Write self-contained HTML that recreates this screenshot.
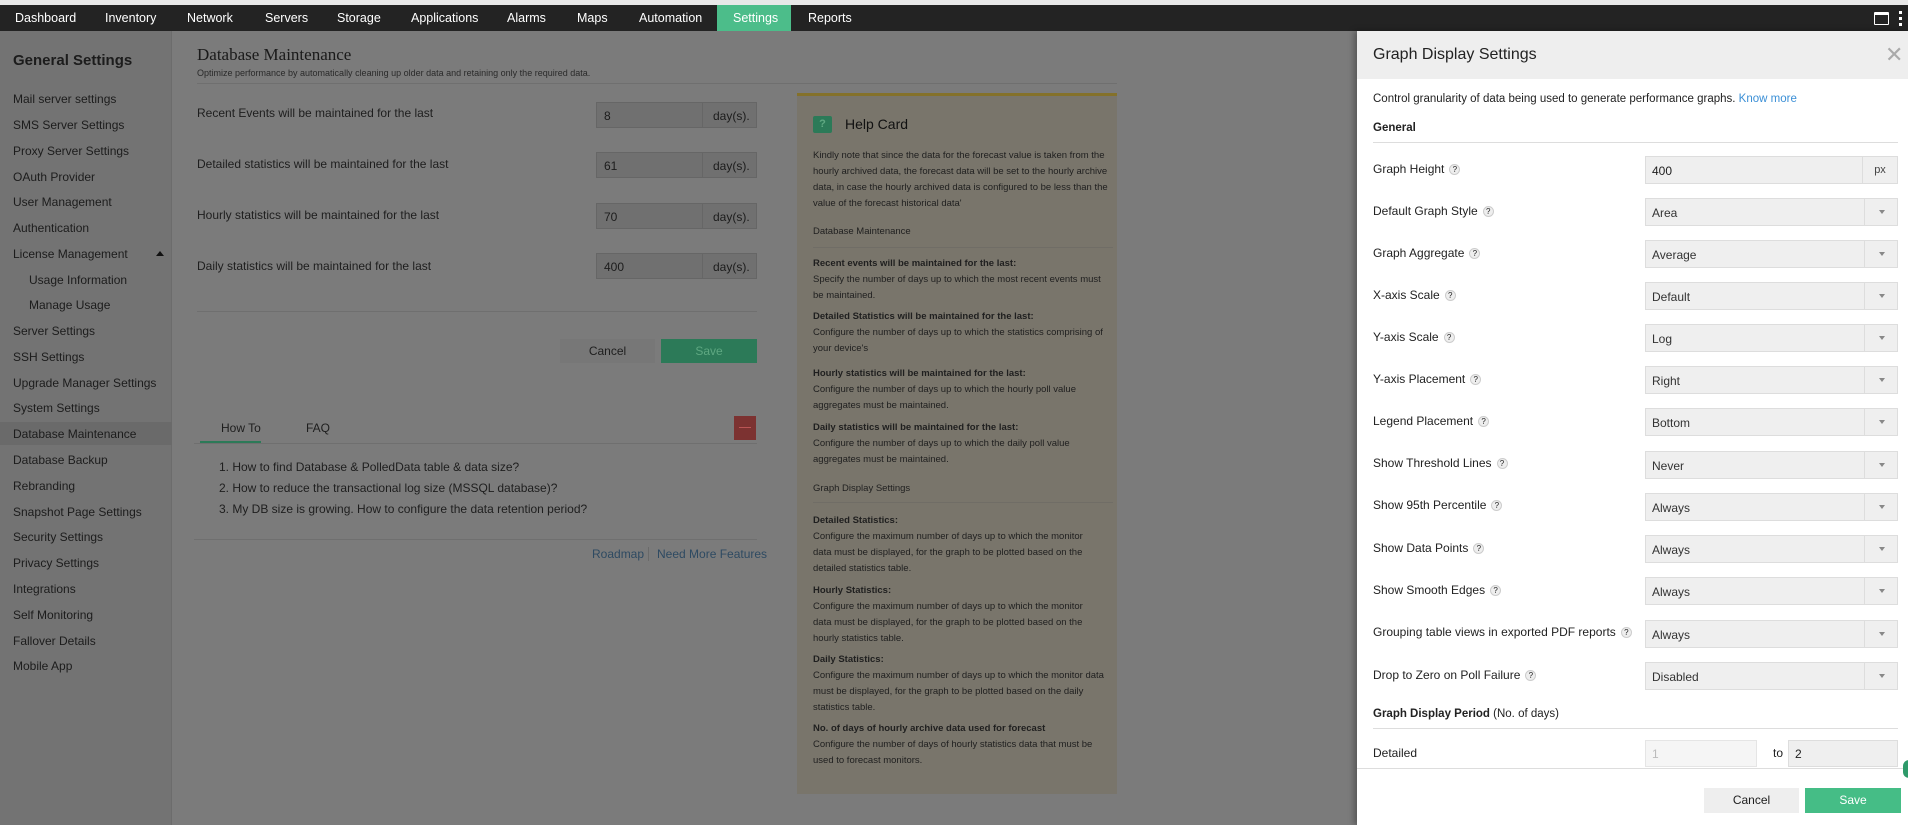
<!DOCTYPE html>
<html><head><meta charset="utf-8"><style>
*{box-sizing:border-box;margin:0;padding:0}
body{width:1908px;height:825px;overflow:hidden;position:relative;background:#7b7b7b;font-family:"Liberation Sans",sans-serif;color:#1e1e1e}
.a{position:absolute;white-space:nowrap}
#top{left:0;top:0;width:1908px;height:5px;background:#e8e8e8}
#nav{left:0;top:5px;width:1908px;height:26px;background:#232323}
#tab{left:717px;top:5px;width:74px;height:26px;background:#4cbd8a}
#side{left:0;top:31px;width:172px;height:794px;background:#737373;border-right:1px solid #6c6c6c}
.si{position:absolute;left:13px;font-size:12px;color:#1c1c1c}
.in{position:absolute;height:26px;background:#707070;border:1px solid #666;font-size:12px;padding:6px 7px;color:#1c1c1c}
.hc{font-size:9.5px;color:#1f1f1f;line-height:16px;white-space:normal;width:300px}
#panel{left:1357px;top:31px;width:551px;height:794px;background:#fff;box-shadow:-3px 0 6px rgba(0,0,0,.3)}
.pl{position:absolute;left:16px;font-size:12px;color:#222}
.q{display:inline-block;width:11px;height:11px;border-radius:50%;background:#eee;border:1px solid #ccc;font-size:8px;text-align:center;line-height:9px;margin-left:5px;vertical-align:middle}
.sel{position:absolute;left:288px;width:253px;height:28px;background:#efefef;border:1px solid #ddd;font-size:12px;padding:7px 6px;color:#333}
.sel:after{content:"";position:absolute;right:0;top:0;width:32px;height:26px;border-left:1px solid #ddd}
.sel i{position:absolute;right:12px;top:11px;border:3.5px solid transparent;border-top:4px solid #888}
</style></head><body>
<div class="a" id="top"></div>
<div class="a" id="nav"></div>
<div class="a" id="tab"></div>
<div class="a" style="left:0;top:5px;width:900px;height:26px">
<span class="a" style="left:15px;top:6px;color:#fff;font-size:12.5px">Dashboard</span>
<span class="a" style="left:105px;top:6px;color:#fff;font-size:12.5px">Inventory</span>
<span class="a" style="left:187px;top:6px;color:#fff;font-size:12.5px">Network</span>
<span class="a" style="left:265px;top:6px;color:#fff;font-size:12.5px">Servers</span>
<span class="a" style="left:337px;top:6px;color:#fff;font-size:12.5px">Storage</span>
<span class="a" style="left:411px;top:6px;color:#fff;font-size:12.5px">Applications</span>
<span class="a" style="left:507px;top:6px;color:#fff;font-size:12.5px">Alarms</span>
<span class="a" style="left:577px;top:6px;color:#fff;font-size:12.5px">Maps</span>
<span class="a" style="left:639px;top:6px;color:#fff;font-size:12.5px">Automation</span>
<span class="a" style="left:733px;top:6px;color:#fff;font-size:12.5px">Settings</span>
<span class="a" style="left:808px;top:6px;color:#fff;font-size:12.5px">Reports</span>
</div>
<div class="a" style="left:1874px;top:12px;width:15px;height:13px;border:1.5px solid #fff;border-top-width:3px;border-radius:1px"></div>
<div class="a" style="left:1899px;top:11px;width:4px;height:15px;border-left:3px dotted #fff"></div>

<div class="a" id="side">
<div class="a" style="left:13px;top:21px;font-size:15px;font-weight:bold;color:#1c1c1c">General Settings</div>
<div class="a" style="left:0;top:391px;width:172px;height:23px;background:#6a6a6a"></div>
<div class="si" style="top:61px">Mail server settings</div>
<div class="si" style="top:87px">SMS Server Settings</div>
<div class="si" style="top:113px">Proxy Server Settings</div>
<div class="si" style="top:139px">OAuth Provider</div>
<div class="si" style="top:164px">User Management</div>
<div class="si" style="top:190px">Authentication</div>
<div class="si" style="top:216px">License Management</div>
<div class="a" style="left:156px;top:220px;border:4px solid transparent;border-bottom:5px solid #111;border-top:0"></div>
<div class="si" style="left:29px;top:242px">Usage Information</div>
<div class="si" style="left:29px;top:267px">Manage Usage</div>
<div class="si" style="top:293px">Server Settings</div>
<div class="si" style="top:319px">SSH Settings</div>
<div class="si" style="top:345px">Upgrade Manager Settings</div>
<div class="si" style="top:370px">System Settings</div>
<div class="si" style="top:396px">Database Maintenance</div>
<div class="si" style="top:422px">Database Backup</div>
<div class="si" style="top:448px">Rebranding</div>
<div class="si" style="top:474px">Snapshot Page Settings</div>
<div class="si" style="top:499px">Security Settings</div>
<div class="si" style="top:525px">Privacy Settings</div>
<div class="si" style="top:551px">Integrations</div>
<div class="si" style="top:577px">Self Monitoring</div>
<div class="si" style="top:603px">Fallover Details</div>
<div class="si" style="top:628px">Mobile App</div>
</div>

<div class="a" style="left:197px;top:45px;font-size:17px;font-family:'Liberation Serif',serif;color:#1a1a1a">Database Maintenance</div>
<div class="a" style="left:197px;top:68px;font-size:9px;color:#2a2a2a">Optimize performance by automatically cleaning up older data and retaining only the required data.</div>
<div class="a" style="left:197px;top:83px;width:920px;height:1px;background:#6f6f6f"></div>

<div class="a" style="left:197px;top:106px;font-size:12px">Recent Events will be maintained for the last</div>
<div class="a" style="left:197px;top:157px;font-size:12px">Detailed statistics will be maintained for the last</div>
<div class="a" style="left:197px;top:208px;font-size:12px">Hourly statistics will be maintained for the last</div>
<div class="a" style="left:197px;top:259px;font-size:12px">Daily statistics will be maintained for the last</div>
<div class="in" style="left:596px;top:102px;width:107px">8</div><div class="in" style="left:702px;top:102px;width:55px;padding-left:10px">day(s).</div>
<div class="in" style="left:596px;top:152px;width:107px">61</div><div class="in" style="left:702px;top:152px;width:55px;padding-left:10px">day(s).</div>
<div class="in" style="left:596px;top:203px;width:107px">70</div><div class="in" style="left:702px;top:203px;width:55px;padding-left:10px">day(s).</div>
<div class="in" style="left:596px;top:253px;width:107px">400</div><div class="in" style="left:702px;top:253px;width:55px;padding-left:10px">day(s).</div>
<div class="a" style="left:197px;top:311px;width:560px;height:1px;background:#6f6f6f"></div>
<div class="a" style="left:560px;top:339px;width:95px;height:24px;background:#777;font-size:12px;text-align:center;line-height:24px">Cancel</div>
<div class="a" style="left:661px;top:339px;width:96px;height:24px;background:#2c7a58;font-size:12px;text-align:center;line-height:24px;color:#5fa882">Save</div>

<div class="a" style="left:221px;top:421px;font-size:12px">How To</div>
<div class="a" style="left:306px;top:421px;font-size:12px">FAQ</div>
<div class="a" style="left:194px;top:443px;width:563px;height:1px;background:#6f6f6f"></div>
<div class="a" style="left:200px;top:441px;width:61px;height:2px;background:#2c7a58"></div>
<div class="a" style="left:734px;top:416px;width:22px;height:24px;background:#7c3231"><div style="position:absolute;left:5px;top:11px;width:12px;height:1px;background:#b55"></div></div>
<div class="a" style="left:219px;top:460px;font-size:12px">1. How to find Database &amp; PolledData table &amp; data size?</div>
<div class="a" style="left:219px;top:481px;font-size:12px">2. How to reduce the transactional log size (MSSQL database)?</div>
<div class="a" style="left:219px;top:502px;font-size:12px">3. My DB size is growing. How to configure the data retention period?</div>
<div class="a" style="left:194px;top:539px;width:563px;height:1px;background:#6f6f6f"></div>
<div class="a" style="left:592px;top:547px;font-size:12px;color:#2e4a62">Roadmap</div>
<div class="a" style="left:648px;top:547px;width:1px;height:14px;background:#6a6a6a"></div>
<div class="a" style="left:657px;top:547px;font-size:12px;color:#2e4a62">Need More Features</div>

<div class="a" style="left:797px;top:93px;width:320px;height:701px;background:#79756b;border-top:3px solid #84712a"></div>
<div class="a" style="left:813px;top:116px;width:19px;height:17px;background:#2c7a58;border-radius:2px;color:#5fa882;font-size:11px;font-weight:bold;text-align:center;line-height:17px">?</div>
<div class="a" style="left:845px;top:116px;font-size:14px;color:#111">Help Card</div>
<div class="a hc" style="left:813px;top:148px;width:298px">Kindly note that since the data for the forecast value is taken from the hourly archived data, the forecast data will be set to the hourly archive data, in case the hourly archived data is configured to be less than the value of the forecast historical data'</div>
<div class="a hc" style="left:813px;top:224px">Database Maintenance</div>
<div class="a" style="left:813px;top:247px;width:300px;height:1px;background:#706d66"></div>
<div class="a hc" style="left:813px;top:256px"><b>Recent events will be maintained for the last:</b><br>Specify the number of days up to which the most recent events must be maintained.</div>
<div class="a hc" style="left:813px;top:309px;width:305px"><b>Detailed Statistics will be maintained for the last:</b><br>Configure the number of days up to which the statistics comprising of your device's</div>
<div class="a hc" style="left:813px;top:366px"><b>Hourly statistics will be maintained for the last:</b><br>Configure the number of days up to which the hourly poll value aggregates must be maintained.</div>
<div class="a hc" style="left:813px;top:420px"><b>Daily statistics will be maintained for the last:</b><br>Configure the number of days up to which the daily poll value aggregates must be maintained.</div>
<div class="a hc" style="left:813px;top:481px">Graph Display Settings</div>
<div class="a" style="left:813px;top:502px;width:300px;height:1px;background:#706d66"></div>
<div class="a hc" style="left:813px;top:513px;width:290px"><b>Detailed Statistics:</b><br>Configure the maximum number of days up to which the monitor data must be displayed, for the graph to be plotted based on the detailed statistics table.</div>
<div class="a hc" style="left:813px;top:583px;width:290px"><b>Hourly Statistics:</b><br>Configure the maximum number of days up to which the monitor data must be displayed, for the graph to be plotted based on the hourly statistics table.</div>
<div class="a hc" style="left:813px;top:652px;width:305px"><b>Daily Statistics:</b><br>Configure the maximum number of days up to which the monitor data must be displayed, for the graph to be plotted based on the daily statistics table.</div>
<div class="a hc" style="left:813px;top:721px"><b>No. of days of hourly archive data used for forecast</b><br>Configure the number of days of hourly statistics data that must be used to forecast monitors.</div>

<div class="a" id="panel">
<div class="a" style="left:0;top:0;width:551px;height:48px;background:#eee"></div>
<div class="pl" style="top:15px;font-size:16px">Graph Display Settings</div>
<div class="a" style="left:528px;top:11px;font-size:22px;color:#aaa;font-weight:100">✕</div>
<div class="pl" style="top:62px;font-size:11.5px">Control granularity of data being used to generate performance graphs. <span style="color:#3b8fd6">Know more</span></div>
<div class="pl" style="top:91px;font-weight:bold;font-size:11.5px">General</div>
<div class="a" style="left:16px;top:111px;width:525px;height:1px;background:#ddd"></div>

<div class="pl" style="top:131px">Graph Height<span class="q">?</span></div>
<div class="a" style="left:288px;top:125px;width:253px;height:28px;background:#efefef;border:1px solid #ddd;font-size:12px;padding:7px 6px">400<div style="position:absolute;right:0;top:0;width:35px;height:26px;border-left:1px solid #ddd;text-align:center;line-height:26px;font-size:11px;color:#444">px</div></div>

<div class="pl" style="top:173px">Default Graph Style<span class="q">?</span></div><div class="sel" style="top:167px">Area<i></i></div>
<div class="pl" style="top:215px">Graph Aggregate<span class="q">?</span></div><div class="sel" style="top:209px">Average<i></i></div>
<div class="pl" style="top:257px">X-axis Scale<span class="q">?</span></div><div class="sel" style="top:251px">Default<i></i></div>
<div class="pl" style="top:299px">Y-axis Scale<span class="q">?</span></div><div class="sel" style="top:293px">Log<i></i></div>
<div class="pl" style="top:341px">Y-axis Placement<span class="q">?</span></div><div class="sel" style="top:335px">Right<i></i></div>
<div class="pl" style="top:383px">Legend Placement<span class="q">?</span></div><div class="sel" style="top:377px">Bottom<i></i></div>
<div class="pl" style="top:425px">Show Threshold Lines<span class="q">?</span></div><div class="sel" style="top:420px">Never<i></i></div>
<div class="pl" style="top:467px">Show 95th Percentile<span class="q">?</span></div><div class="sel" style="top:462px">Always<i></i></div>
<div class="pl" style="top:510px">Show Data Points<span class="q">?</span></div><div class="sel" style="top:504px">Always<i></i></div>
<div class="pl" style="top:552px">Show Smooth Edges<span class="q">?</span></div><div class="sel" style="top:546px">Always<i></i></div>
<div class="pl" style="top:594px">Grouping table views in exported PDF reports<span class="q">?</span></div><div class="sel" style="top:589px">Always<i></i></div>
<div class="pl" style="top:637px">Drop to Zero on Poll Failure<span class="q">?</span></div><div class="sel" style="top:631px">Disabled<i></i></div>
<div class="pl" style="top:677px;font-size:11.5px"><b>Graph Display Period</b> (No. of days)</div>
<div class="a" style="left:16px;top:697px;width:525px;height:1px;background:#ddd"></div>
<div class="pl" style="top:715px">Detailed</div>
<div class="a" style="left:288px;top:709px;width:112px;height:27px;background:#f5f5f5;border:1px solid #e5e5e5;font-size:12px;padding:6px;color:#bbb">1</div>
<div class="a" style="left:416px;top:715px;font-size:12px">to</div>
<div class="a" style="left:431px;top:709px;width:110px;height:27px;background:#efefef;border:1px solid #ddd;font-size:12px;padding:6px">2</div>
<div class="a" style="left:0;top:737px;width:551px;height:1px;background:#ddd"></div>
<div class="a" style="left:347px;top:757px;width:95px;height:25px;background:#eee;font-size:12px;text-align:center;line-height:25px">Cancel</div>
<div class="a" style="left:448px;top:757px;width:96px;height:25px;background:#45bd86;color:#fff;font-size:12px;text-align:center;line-height:25px">Save</div>
<div class="a" style="left:546px;top:729px;width:12px;height:18px;border-radius:9px;background:#2e9a6a"></div>
</div>
</body></html>
